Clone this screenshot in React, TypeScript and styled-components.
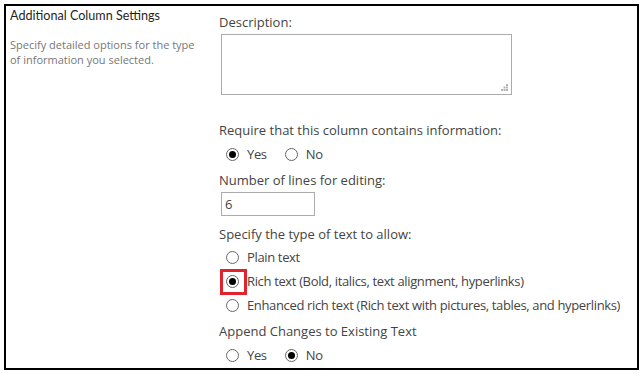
import React from 'react'
import styled, { createGlobalStyle } from 'styled-components'

const GlobalStyle = createGlobalStyle`
  body {
    margin: 0;
    background: #ffffff;
    font-family: 'Open Sans', 'Noto Sans', sans-serif;
  }
`

const Frame = styled.div`
  box-sizing: border-box;
  margin: 4px 0 0 4px;
  width: 635px;
  height: 366px;
  border: 2px solid #000000;
  display: grid;
  grid-template-columns: 213px 1fr;
`

const Aside = styled.div`
  padding: 1px 0 0 4px;
`

const SectionTitle = styled.div`
  font-family: Lato, 'Open Sans', sans-serif;
  font-size: 12.6px;
  line-height: 18px;
  color: #1f1f1f;
`

const SectionHint = styled.div`
  margin-top: 12px;
  font-size: 11px;
  line-height: 15px;
  color: #777777;
  width: 195px;
`

const Fields = styled.div`
  padding-top: 6px;
  display: flex;
  flex-direction: column;
  align-items: flex-start;
  color: #444444;
  font-size: 13px;
`

const Label = styled.div<{ $top?: number }>`
  margin-top: ${p => p.$top ?? 0}px;
  line-height: 20px;
  height: 20px;
  white-space: nowrap;
`

const TextArea = styled.div`
  box-sizing: border-box;
  margin: 2px 0 0 2px;
  width: 291px;
  height: 61px;
  border: 1px solid #ababab;
  position: relative;
`

const Grip = styled.svg`
  position: absolute;
  right: 3px;
  bottom: 3px;
`

const TextBox = styled.div`
  box-sizing: border-box;
  margin: 2px 0 0 2px;
  width: 94px;
  height: 24px;
  border: 1px solid #ababab;
  padding: 0 3px;
  line-height: 22px;
  color: #444444;
`

const OptionRow = styled.div<{ $top?: number }>`
  margin-top: ${p => p.$top ?? 0}px;
  display: flex;
  align-items: center;
  gap: 18px;
  height: 20px;
  padding-left: 7px;
`

const Option = styled.label`
  display: flex;
  align-items: center;
  gap: 8px;
  white-space: nowrap;
  letter-spacing: -0.35px;
`

const Radio = styled.span<{ $checked?: boolean; $marked?: boolean }>`
  position: relative;
  box-sizing: border-box;
  width: 13px;
  height: 13px;
  border-radius: 50%;
  border: 1px solid #666666;
  display: flex;
  align-items: center;
  justify-content: center;

  &::before {
    content: '';
    width: 7px;
    height: 7px;
    border-radius: 50%;
    background: #000000;
    display: ${p => (p.$checked ? 'block' : 'none')};
  }

  &::after {
    content: '';
    position: absolute;
    left: -7px;
    top: -7px;
    width: 21px;
    height: 20px;
    border: 3px solid #e3232c;
    display: ${p => (p.$marked ? 'block' : 'none')};
  }
`

function RadioOption({ label, checked, marked }: { label: string; checked?: boolean; marked?: boolean }) {
  return (
    <Option>
      <Radio $checked={checked} $marked={marked} />
      {label}
    </Option>
  )
}

export default function App() {
  return (
    <>
      <GlobalStyle />
      <Frame>
        <Aside>
          <SectionTitle>Additional Column Settings</SectionTitle>
          <SectionHint>Specify detailed options for the type of information you selected.</SectionHint>
        </Aside>
        <Fields>
          <Label>Description:</Label>
          <TextArea>
            {/* resize grip */}
            <Grip width='7' height='7' viewBox='0 0 7 7'>
              <rect x='5' y='0' width='2' height='2' fill='#b5b5b5' />
              <rect x='5' y='2.5' width='2' height='2' fill='#b5b5b5' />
              <rect x='2.5' y='2.5' width='2' height='2' fill='#b5b5b5' />
              <rect x='0' y='5' width='2' height='2' fill='#b5b5b5' />
              <rect x='2.5' y='5' width='2' height='2' fill='#b5b5b5' />
              <rect x='5' y='5' width='2' height='2' fill='#b5b5b5' />
            </Grip>
          </TextArea>
          <Label $top={25}>Require that this column contains information:</Label>
          <OptionRow $top={4}>
            <RadioOption label='Yes' checked />
            <RadioOption label='No' />
          </OptionRow>
          <Label $top={6}>Number of lines for editing:</Label>
          <TextBox>6</TextBox>
          <Label $top={8}>Specify the type of text to allow:</Label>
          <OptionRow $top={3}>
            <RadioOption label='Plain text' />
          </OptionRow>
          <OptionRow $top={4}>
            <RadioOption label='Rich text (Bold, italics, text alignment, hyperlinks)' checked marked />
          </OptionRow>
          <OptionRow $top={4}>
            <RadioOption label='Enhanced rich text (Rich text with pictures, tables, and hyperlinks)' />
          </OptionRow>
          <Label $top={6}>Append Changes to Existing Text</Label>
          <OptionRow $top={4}>
            <RadioOption label='Yes' />
            <RadioOption label='No' checked />
          </OptionRow>
        </Fields>
      </Frame>
    </>
  )
}
